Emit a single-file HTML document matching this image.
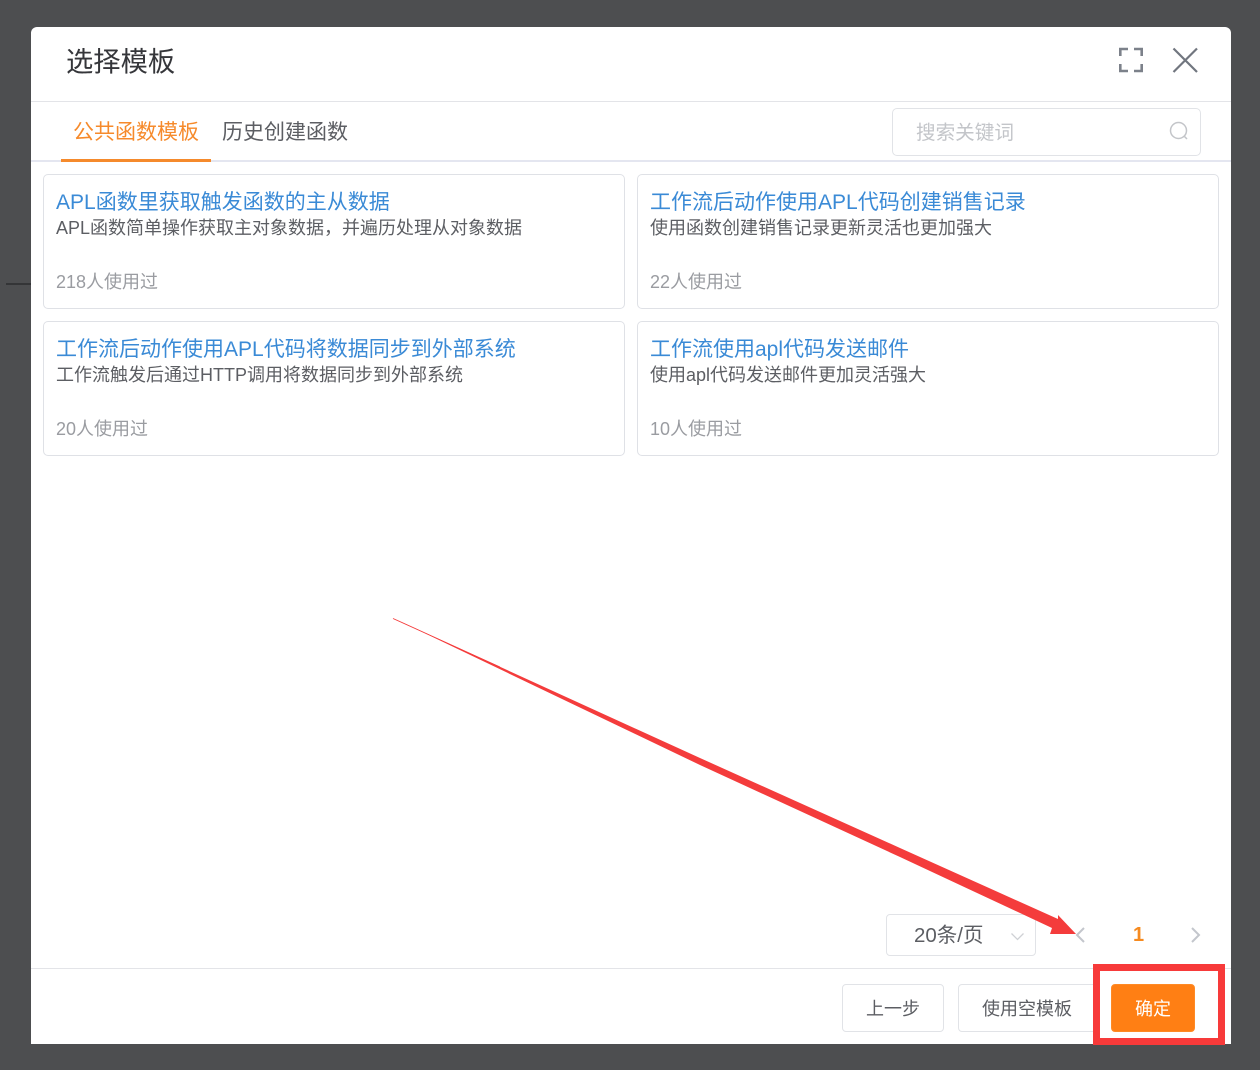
<!DOCTYPE html>
<html lang="zh-CN"><head><meta charset="utf-8"><title>选择模板</title>
<style>
*{box-sizing:border-box}
html,body{margin:0;padding:0}
body{width:1260px;height:1070px;position:relative;overflow:hidden;background:#4d4e50;font-family:"Liberation Sans","Noto Sans CJK SC",sans-serif}
.a{position:absolute;white-space:nowrap}
.modal{left:31px;top:27px;width:1200px;height:1017px;background:#fff;border-radius:6px 6px 0 0}
.card{position:absolute;width:582px;height:135px;border:1px solid #dfe1e6;border-radius:5px;background:#fff}
.t{position:absolute;left:12px;top:13px;font-size:21px;line-height:30px;color:#3a8ad6;white-space:nowrap}
.d{position:absolute;left:12px;top:40px;font-size:18px;line-height:26px;color:#5c5e63;white-space:nowrap}
.c{position:absolute;left:12px;top:94px;font-size:18px;line-height:26px;color:#9a9ca1;white-space:nowrap}
.btn{position:absolute;top:984px;height:48px;border:1px solid #e1e3e7;border-radius:4px;background:#fff;color:#5c5e63;font-size:18px;line-height:48px;text-align:center}
</style></head>
<body>
<div class="a" style="left:6px;top:283px;width:25px;height:2px;background:#343537"></div>
<div class="a modal"></div>

<div class="a" style="left:66px;top:42px;font-size:27.300px;line-height:40px;color:#35363a">选择模板</div>
<svg class="a" style="left:1116px;top:45px" width="30" height="30" viewBox="0 0 30 30" fill="none" stroke="#7c818a" stroke-width="2.6"><path d="M12 4H4.300V11M18 4H25.700V11M4.300 19V26H12M25.700 19V26H18"/></svg>
<svg class="a" style="left:1170px;top:45px" width="30" height="30" viewBox="0 0 30 30" fill="none" stroke="#71767f" stroke-width="2.2"><path d="M3.500 3.500L27 27M27 3.500L3.500 27"/></svg>
<div class="a" style="left:31px;top:101px;width:1200px;height:1px;background:#e3e4e8"></div>

<div class="a" style="left:73px;top:117px;font-size:21px;line-height:32px;color:#f68a2b">公共函数模板</div>
<div class="a" style="left:222px;top:117px;font-size:21px;line-height:32px;color:#5c5e63">历史创建函数</div>
<div class="a" style="left:31px;top:160px;width:1200px;height:2px;background:#e4e6f0"></div>
<div class="a" style="left:61px;top:159px;width:150px;height:3px;background:#f58a2c"></div>
<div class="a" style="left:892px;top:108px;width:309px;height:48px;border:1px solid #e1e3e7;border-radius:5px;background:#fff"></div>
<div class="a" style="left:916px;top:118px;font-size:19.600px;line-height:30px;color:#c3c5c9">搜索关键词</div>
<svg class="a" style="left:1168px;top:120px" width="22" height="22" viewBox="0 0 22 22" fill="none" stroke="#c3c5c9" stroke-width="1.500"><circle cx="10.500" cy="10.500" r="8"/><path d="M16.500 16.500L19 19"/></svg>

<div class="card" style="left:43px;top:174px">
<div class="t">APL函数里获取触发函数的主从数据</div>
<div class="d">APL函数简单操作获取主对象数据，并遍历处理从对象数据</div>
<div class="c">218人使用过</div></div>
<div class="card" style="left:637px;top:174px">
<div class="t">工作流后动作使用APL代码创建销售记录</div>
<div class="d">使用函数创建销售记录更新灵活也更加强大</div>
<div class="c">22人使用过</div></div>
<div class="card" style="left:43px;top:321px">
<div class="t">工作流后动作使用APL代码将数据同步到外部系统</div>
<div class="d">工作流触发后通过HTTP调用将数据同步到外部系统</div>
<div class="c">20人使用过</div></div>
<div class="card" style="left:637px;top:321px">
<div class="t">工作流使用apl代码发送邮件</div>
<div class="d">使用apl代码发送邮件更加灵活强大</div>
<div class="c">10人使用过</div></div>

<div class="a" style="left:886px;top:914px;width:150px;height:42px;border:1px solid #e1e3e7;border-radius:4px;background:#fff"></div>
<div class="a" style="left:914px;top:920px;font-size:20.500px;line-height:32px;color:#5c5e63">20条/页</div>
<svg class="a" style="left:1009px;top:930px" width="18" height="14" viewBox="0 0 18 14" fill="none" stroke="#cfd1d5" stroke-width="1.300"><path d="M2.500 3.500L8.500 9.500L14.500 3.500"/></svg>
<svg class="a" style="left:1072px;top:925px" width="16" height="20" viewBox="0 0 16 20" fill="none" stroke="#c3c6cc" stroke-width="2"><path d="M12 3L5 10L12 17"/></svg>
<div class="a" style="left:1133px;top:920px;font-size:20px;line-height:30px;font-weight:700;color:#f68a1f">1</div>
<svg class="a" style="left:1188px;top:925px" width="16" height="20" viewBox="0 0 16 20" fill="none" stroke="#c3c6cc" stroke-width="2"><path d="M4 3L11 10L4 17"/></svg>

<div class="a" style="left:31px;top:968px;width:1200px;height:1px;background:#e3e4e8"></div>
<div class="btn" style="left:842px;width:102px">上一步</div>
<div class="btn" style="left:958px;width:139px;padding-right:1px">使用空模板</div>
<div class="btn" style="left:1111px;width:84px;background:#ff7f14;border-color:#ff8a25;color:#fff">确定</div>

<svg class="a" style="left:0;top:0" width="1260" height="1070" viewBox="0 0 1260 1070" fill="none">
<path d="M393 618L700 758L900 848L1058 919L1058 915L1076 934L1050 934L1052 928L900 857L700 765Z" fill="#f43c3c"/>
<path d="M393 618.500L500 667" stroke="#f43c3c" stroke-width=".8"/>
<rect x="1096.500" y="967.500" width="125" height="74" stroke="#f73a3a" stroke-width="7"/>
</svg>
</body></html>
